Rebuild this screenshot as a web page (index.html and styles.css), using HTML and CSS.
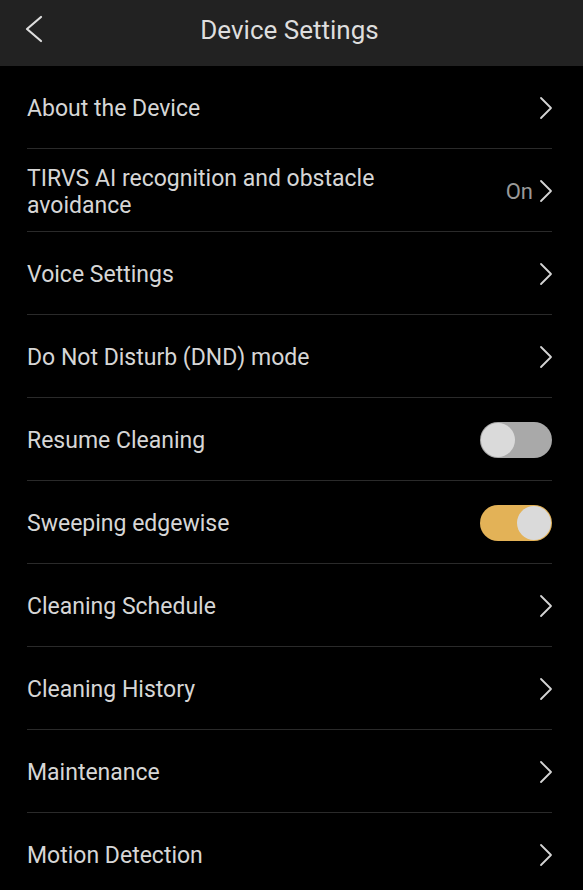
FILE: index.html
```html
<!DOCTYPE html>
<html lang="en">
<head>
  <meta charset="UTF-8">
  <meta name="viewport" content="width=device-width, initial-scale=1.0">
  <title>Device Settings</title>
  <link rel="stylesheet" href="styles.css">
</head>
<body>
  <div class="header">
    <button class="back" aria-label="Back">
      <svg width="24" height="28" viewBox="0 0 24 28"><path d="M20 2 L6 14 L20 26" fill="none" stroke="#dedede" stroke-width="2.2" stroke-linecap="round" stroke-linejoin="round"/></svg>
    </button>
    <h1>Device Settings</h1>
  </div>
  <ul class="settings">
    <li>
      <span class="label">About the Device</span>
      <span class="chev"><svg width="14" height="24" viewBox="0 0 14 24"><path d="M2 2 L12 12 L2 22" fill="none" stroke="#d4d4d4" stroke-width="1.8" stroke-linecap="round" stroke-linejoin="round"/></svg></span>
    </li>
    <li>
      <span class="label"><span class="wrap">TIRVS AI recognition and obstacle avoidance</span></span>
      <span class="value">On</span>
      <span class="chev"><svg width="14" height="24" viewBox="0 0 14 24"><path d="M2 2 L12 12 L2 22" fill="none" stroke="#d4d4d4" stroke-width="1.8" stroke-linecap="round" stroke-linejoin="round"/></svg></span>
    </li>
    <li>
      <span class="label">Voice Settings</span>
      <span class="chev"><svg width="14" height="24" viewBox="0 0 14 24"><path d="M2 2 L12 12 L2 22" fill="none" stroke="#d4d4d4" stroke-width="1.8" stroke-linecap="round" stroke-linejoin="round"/></svg></span>
    </li>
    <li>
      <span class="label">Do Not Disturb (DND) mode</span>
      <span class="chev"><svg width="14" height="24" viewBox="0 0 14 24"><path d="M2 2 L12 12 L2 22" fill="none" stroke="#d4d4d4" stroke-width="1.8" stroke-linecap="round" stroke-linejoin="round"/></svg></span>
    </li>
    <li>
      <span class="label">Resume Cleaning</span>
      <span class="toggle"><span class="knob"></span></span>
    </li>
    <li>
      <span class="label">Sweeping edgewise</span>
      <span class="toggle on"><span class="knob"></span></span>
    </li>
    <li>
      <span class="label">Cleaning Schedule</span>
      <span class="chev"><svg width="14" height="24" viewBox="0 0 14 24"><path d="M2 2 L12 12 L2 22" fill="none" stroke="#d4d4d4" stroke-width="1.8" stroke-linecap="round" stroke-linejoin="round"/></svg></span>
    </li>
    <li>
      <span class="label">Cleaning History</span>
      <span class="chev"><svg width="14" height="24" viewBox="0 0 14 24"><path d="M2 2 L12 12 L2 22" fill="none" stroke="#d4d4d4" stroke-width="1.8" stroke-linecap="round" stroke-linejoin="round"/></svg></span>
    </li>
    <li>
      <span class="label">Maintenance</span>
      <span class="chev"><svg width="14" height="24" viewBox="0 0 14 24"><path d="M2 2 L12 12 L2 22" fill="none" stroke="#d4d4d4" stroke-width="1.8" stroke-linecap="round" stroke-linejoin="round"/></svg></span>
    </li>
    <li>
      <span class="label">Motion Detection</span>
      <span class="chev"><svg width="14" height="24" viewBox="0 0 14 24"><path d="M2 2 L12 12 L2 22" fill="none" stroke="#d4d4d4" stroke-width="1.8" stroke-linecap="round" stroke-linejoin="round"/></svg></span>
    </li>
  </ul>
</body>
</html>
```

FILE: styles.css
```css
body {
  margin: 0;
  padding: 0;
  background-color: #000;
  font-family: Roboto, "Liberation Sans", sans-serif;
  color: #d6d6d6;
  overflow: hidden;
}
.header {
  height: 66px;
  background-color: #222;
  display: flex;
  align-items: center;
  justify-content: center;
  position: relative;
}
.header h1 {
  margin: 0 0 0 -4px;
  font-size: 26px;
  font-weight: 400;
  color: #dedede;
  padding-bottom: 6px;
}
.header .back {
  position: absolute;
  left: 21px;
  top: 15px;
  background: none;
  border: none;
  padding: 0;
  cursor: pointer;
  display: flex;
}
.settings {
  list-style-type: none;
  margin: 0 31px 0 27px;
  padding: 0;
}
.settings li {
  display: flex;
  align-items: center;
  height: 82px;
  border-bottom: 1px solid #2a2a2a;
  font-size: 23px;
}
.settings li .label {
  flex-grow: 1;
  line-height: 27px;
  padding-top: 3px;
}
.settings li .label .wrap {
  display: block;
  max-width: 420px;
}
.settings li .value {
  color: #999;
  font-size: 22px;
  margin-right: 6px;
  padding-top: 3px;
}
.settings li .chev {
  display: flex;
  margin-right: -1px;
  padding-top: 2px;
}
.toggle {
  width: 72px;
  height: 36px;
  border-radius: 18px;
  background-color: #a9a9a9;
  display: flex;
  align-items: center;
  padding: 1px;
  box-sizing: border-box;
  margin-top: 1px;
}
.toggle .knob {
  width: 34px;
  height: 34px;
  border-radius: 50%;
  background-color: #dadada;
}
.toggle.on {
  background-color: #e3b257;
  justify-content: flex-end;
}
```
